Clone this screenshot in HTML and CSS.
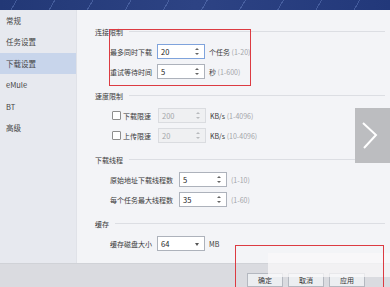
FILE: index.html
```html
<!DOCTYPE html>
<html lang="zh-CN">
<head>
  <meta charset="UTF-8" />
  <title>下载设置</title>
  <link rel="stylesheet" href="styles.css">
</head>
<body>
  <div class="banner"></div>

  <div class="main">
    <ul class="sidebar">
      <li>常规</li>
      <li>任务设置</li>
      <li class="active">下载设置</li>
      <li>eMule</li>
      <li>BT</li>
      <li>高级</li>
    </ul>

    <div class="content">
      <div class="section">
        <div class="title">连接限制</div>
        <div class="row">
          <span class="label w47">最多同时下载</span>
          <div class="spin focus"><span>20</span><i class="arrows"></i></div>
          <span class="suffix">个任务 <em>(1-20)</em></span>
        </div>
        <div class="row">
          <span class="label w47">重试等待时间</span>
          <div class="spin"><span>5</span><i class="arrows"></i></div>
          <span class="suffix">秒 <em>(1-600)</em></span>
        </div>
      </div>

      <div class="section">
        <div class="title">速度限制</div>
        <div class="row">
          <span class="label check"><b class="box"></b>下载限速</span>
          <div class="spin disabled"><span>200</span><i class="arrows"></i></div>
          <span class="suffix">KB/s <em>(1-4096)</em></span>
        </div>
        <div class="row">
          <span class="label check"><b class="box"></b>上传限速</span>
          <div class="spin disabled"><span>20</span><i class="arrows"></i></div>
          <span class="suffix">KB/s <em>(10-4096)</em></span>
        </div>
      </div>

      <div class="section">
        <div class="title">下载线程</div>
        <div class="row">
          <span class="label w69">原始地址下载线程数</span>
          <div class="spin"><span>5</span><i class="arrows"></i></div>
          <span class="suffix"><em>(1-10)</em></span>
        </div>
        <div class="row">
          <span class="label w69">每个任务最大线程数</span>
          <div class="spin"><span>35</span><i class="arrows"></i></div>
          <span class="suffix"><em>(1-60)</em></span>
        </div>
      </div>

      <div class="section">
        <div class="title">缓存</div>
        <div class="row">
          <span class="label w47">缓存磁盘大小</span>
          <div class="spin combo"><span>64</span><i class="caret"></i></div>
          <span class="suffix">MB</span>
        </div>
      </div>
    </div>
  </div>

  <div class="footer">
    <button class="btn">确定</button>
    <button class="btn">取消</button>
    <button class="btn">应用</button>
  </div>

  <!-- overlays on top of the screenshot -->
  <div class="next">
    <svg width="35" height="55" viewBox="0 0 35 55">
      <polyline points="8,15 21,27 9,40" fill="none" stroke="#fff" stroke-width="2"/>
    </svg>
  </div>
  <div class="glare"></div>
  <div class="mark mark-top"></div>
  <div class="mark mark-bottom"></div>
</body>
</html>
```

FILE: styles.css
```css
* {
  box-sizing: border-box;
  margin: 0;
  padding: 0;
}

body {
  width: 390px;
  height: 287px;
  overflow: hidden;
  position: relative;
  display: flex;
  flex-direction: column;
  font-family: "Noto Sans CJK SC", "Noto Sans", sans-serif;
  font-size: 7px;
  color: #3a3a3a;
  background: #f3f4f7;
}

.banner {
  height: 10px;
  background:
    repeating-linear-gradient(120deg, transparent 0 14px, rgba(160,190,255,0.25) 14px 15px, transparent 15px 33px),
    linear-gradient(90deg, #223876, #2d4384 50%, #22387a);
}

.main {
  height: 258px;
  display: flex;
}

.sidebar {
  width: 77px;
  list-style: none;
  background: #e7e9ef;
  border-right: 1px solid #e0e2e8;
  padding-top: 0;
}

.sidebar li {
  height: 21.5px;
  line-height: 21.5px;
  padding-left: 6px;
  font-size: 7.5px;
  color: #444;
}

.sidebar li.active {
  background: #c8d5eb;
}

.content {
  flex: 1;
  padding: 16px 5px 0 18px;
  background: #f3f4f7;
}

.section {
  margin-bottom: 8px;
}

.title {
  display: flex;
  align-items: center;
  height: 12px;
  margin-bottom: 4px;
}

.title::after {
  content: "";
  flex: 1;
  margin-left: 6px;
  border-top: 1px solid #dcdee3;
}

.row {
  display: flex;
  align-items: center;
  height: 20px;
  padding-left: 15px;
}

.label {
  white-space: nowrap;
}

.w47 { width: 47px; }
.w69 { width: 69px; }

.check {
  display: flex;
  align-items: center;
  width: 46px;
  margin-left: 2px;
}

.box {
  width: 9px;
  height: 9px;
  margin-right: 2px;
  background: #fff;
  border: 1px solid #8e8e8e;
  border-radius: 1px;
}

.spin {
  position: relative;
  width: 48px;
  height: 15px;
  line-height: 13px;
  padding-left: 3px;
  font-size: 7.5px;
  color: #222;
  background: #fff;
  border: 1px solid #adb2bb;
}

.spin.focus {
  border-color: #7fa3dc;
}

.spin.disabled {
  background: #eff0f2;
  border-color: #dadce0;
  color: #a5a7ab;
}

.arrows::before,
.arrows::after {
  content: "";
  position: absolute;
  right: 5px;
  border-left: 2px solid transparent;
  border-right: 2px solid transparent;
}

.arrows::before {
  top: 3px;
  border-bottom: 2px solid #666;
}

.arrows::after {
  bottom: 3px;
  border-top: 2px solid #666;
}

.disabled .arrows::before { border-bottom-color: #b8babd; }
.disabled .arrows::after { border-top-color: #b8babd; }

.caret {
  position: absolute;
  right: 5px;
  top: 6px;
  border-left: 2.5px solid transparent;
  border-right: 2.5px solid transparent;
  border-top: 3px solid #555;
}

.suffix {
  margin-left: 4px;
  white-space: nowrap;
}

.suffix em {
  font-style: normal;
  color: #a3a5a9;
}

.footer {
  flex: 1;
  display: flex;
  gap: 5px;
  padding: 9px 0 0 247px;
  background: #dadbe0;
  border-top: 1px solid #d0d2d7;
}

.btn {
  width: 36px;
  height: 14px;
  font-family: inherit;
  font-size: 7px;
  line-height: 10px;
  color: #333;
  background: #eceef1;
  border: 1px solid #b4b8c0;
}

.next {
  position: absolute;
  left: 355px;
  top: 108px;
  width: 35px;
  height: 55px;
  background: #bcbdc0;
}

.glare {
  position: absolute;
  left: 268px;
  top: 253px;
  width: 122px;
  height: 24px;
  background: rgba(250, 248, 249, 0.75);
}

.mark {
  position: absolute;
  border: 1.5px solid #dc3b42;
}

.mark-top {
  left: 109px;
  top: 29px;
  width: 142px;
  height: 57px;
}

.mark-bottom {
  left: 235px;
  top: 245px;
  width: 149px;
  height: 50px;
}
```
